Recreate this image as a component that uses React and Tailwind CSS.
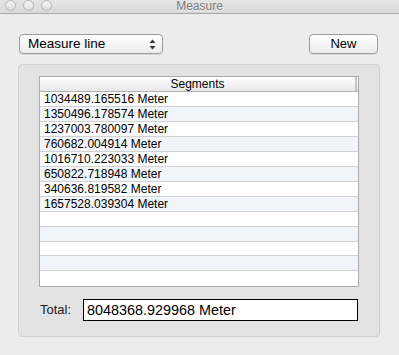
const rows = [
  "1034489.165516 Meter",
  "1350496.178574 Meter",
  "1237003.780097 Meter",
  "760682.004914 Meter",
  "1016710.223033 Meter",
  "650822.718948 Meter",
  "340636.819582 Meter",
  "1657528.039304 Meter",
  "",
  "",
  "",
  "",
  "",
];

function TrafficLight() {
  return (
    <span className="w-[11px] h-[11px] rounded-full border border-[#b4b4b4] bg-gradient-to-b from-[#f4f4f4] to-[#dedede]" />
  );
}

export default function App() {
  return (
    <div
      className="w-[399px] h-[355px] overflow-hidden bg-[#ececec] text-black"
      style={{ fontFamily: '"Liberation Sans", Arial, sans-serif' }}
    >
      {/* title bar */}
      <div className="relative h-[14px] bg-gradient-to-b from-[#e4e4e4] to-[#dadada] border-b border-[#a9a9a9] flex items-start">
        <div className="flex gap-[7px] pl-[5px] pt-[0px]">
          <TrafficLight />
          <TrafficLight />
          <TrafficLight />
        </div>
        <div className="absolute inset-x-0 top-[-1px] text-center text-[12px] leading-[14px] text-[#7a7a7a] [text-shadow:0_1px_0_#f4f4f4]">
          Measure
        </div>
      </div>

      {/* toolbar row */}
      <div className="flex items-center justify-between pl-[19px] pr-[21px] pt-[20px]">
        <div className="w-[144px] h-[20px] rounded-[4px] border border-[#9c9c9c] bg-gradient-to-b from-white to-[#ececec] shadow-[0_1px_0_rgba(0,0,0,0.08)] flex items-center pl-[8px] pr-[6px]">
          <span className="flex-1 text-[13.5px] leading-[18px]">Measure line</span>
          <svg width="7" height="11" viewBox="0 0 7 11">
            <path d="M3.5 0.5 L6.5 4 L0.5 4 Z" fill="#333" />
            <path d="M3.5 10.5 L6.5 7 L0.5 7 Z" fill="#333" />
          </svg>
        </div>
        <div className="w-[69px] h-[20px] rounded-[4px] border border-[#9c9c9c] bg-gradient-to-b from-white to-[#ececec] shadow-[0_1px_0_rgba(0,0,0,0.08)] flex items-center justify-center text-[13px] leading-[18px]">
          New
        </div>
      </div>

      {/* group box */}
      <div className="ml-[18px] mt-[10px] w-[362px] h-[273px] rounded-[4px] border border-[#d0d0d0] bg-[#e3e3e3] pt-[11px] pl-[20px]">
        <div className="w-[320px] h-[211px] border border-[#ababab] bg-white flex flex-col">
          <div className="h-[15px] flex border-b border-[#b2b2b2] bg-gradient-to-b from-white to-[#e9e9e9]">
            <div className="flex-1 text-center text-[12px] leading-[14px]">Segments</div>
            <div className="w-[2px] bg-[#c4c4c4]" />
            <div className="w-[1px]" />
          </div>
          {rows.map((r, i) => (
            <div
              key={i}
              className={`h-[15px] border-b border-[#d2d2d2] last:border-b-0 pl-[4px] text-[12px] leading-[15px] ${
                i % 2 === 1 ? "bg-[#f1f4f9]" : "bg-white"
              }`}
            >
              {r}
            </div>
          ))}
        </div>

        <div className="flex items-center mt-[12px] pl-[1px]">
          <span className="w-[43px] text-[13px] text-[#222]">Total:</span>
          <div className="w-[275px] h-[22px] border border-black bg-white pl-[3px] text-[14.4px] leading-[20px]">
            8048368.929968 Meter
          </div>
        </div>
      </div>
    </div>
  );
}
